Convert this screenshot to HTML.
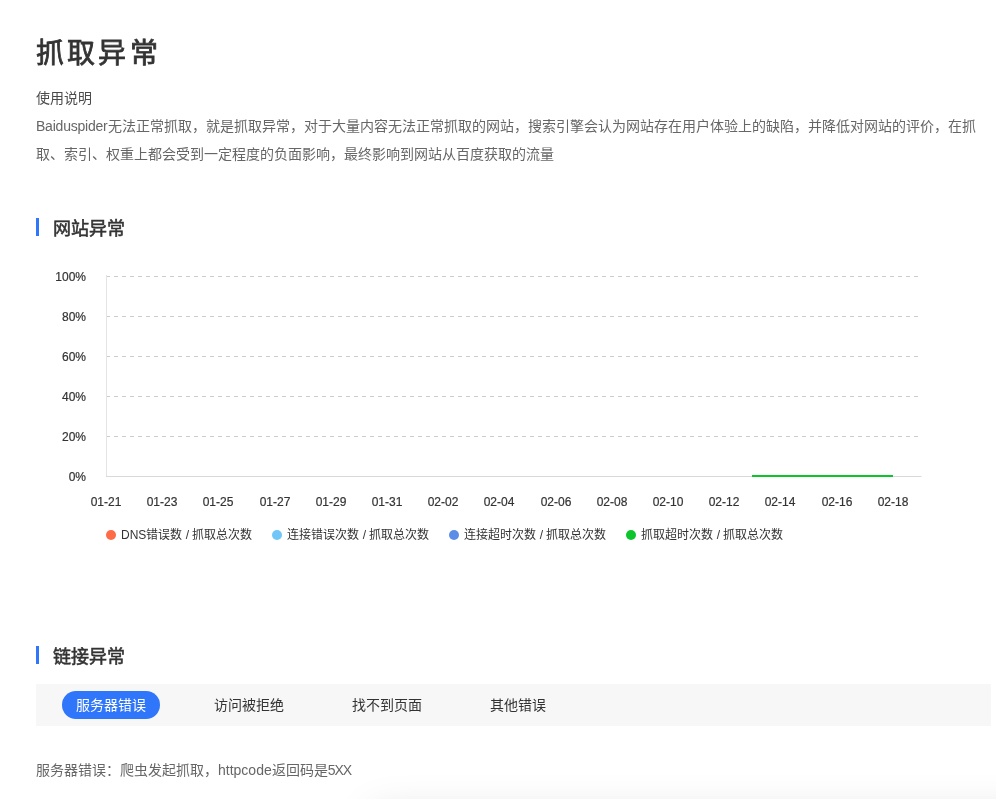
<!DOCTYPE html>
<html lang="zh-CN">
<head>
<meta charset="utf-8">
<title>抓取异常</title>
<style>
*{box-sizing:border-box;margin:0;padding:0}
html,body{width:996px;height:799px;overflow:hidden;background:#fff}
body{font-family:"Liberation Sans",sans-serif;color:#333;position:relative}
.abs{position:absolute;white-space:nowrap}
h1{position:absolute;left:36px;top:33px;font-size:28px;line-height:42px;font-weight:500;-webkit-text-stroke:0.8px #333;letter-spacing:3.2px;color:#333;white-space:nowrap}
.use{left:36px;top:84px;font-size:14px;line-height:28px;color:#4a4a4a}
.desc{position:absolute;left:36px;top:112px;width:955px;white-space:nowrap;font-size:14px;line-height:28px;color:#666}
.sec{position:absolute;left:36px;height:18px;border-left:3px solid #2f76fa;padding-left:14px;font-size:18px;line-height:23px;font-weight:500;-webkit-text-stroke:0.55px #333;color:#333;white-space:nowrap}
.chart{position:absolute;left:0;top:255px}
.ylab{-webkit-text-stroke:0.2px #333;position:absolute;width:50px;text-align:right;left:36px;font-size:12px;line-height:14px;color:#333}
.xlab{-webkit-text-stroke:0.2px #333;position:absolute;width:56px;text-align:center;font-size:12px;line-height:14px;color:#333;top:495px}
.leg{position:absolute;top:527px;font-size:12px;line-height:16px;color:#333;white-space:nowrap}
.leg i{position:absolute;left:-15px;top:3px;width:10px;height:10px;border-radius:50%}
.tabs{position:absolute;left:36px;top:684px;width:955px;height:42px;background:#f7f7f7}
.tab{position:absolute;top:7px;height:28px;line-height:28px;font-size:14px;color:#333;white-space:nowrap}
.tab.on{left:26px;width:98px;text-align:center;border-radius:14px;background:#2f76fa;color:#fff}
.note{left:36px;top:756px;font-size:14px;line-height:28px;color:#666}
.shadow{position:absolute;left:372px;top:812px;width:800px;height:100px;box-shadow:0 0 40px rgba(0,0,0,.13)}
</style>
</head>
<body>
<div id="wrap" style="position:absolute;left:0;top:0;width:996px;height:799px;overflow:hidden;will-change:transform">
<h1>抓取异常</h1>
<div class="abs use">使用说明</div>
<div class="desc"><span style="letter-spacing:-0.22px">Baiduspider</span>无法正常抓取，就是抓取异常，对于大量内容无法正常抓取的网站，搜索引擎会认为网站存在用户体验上的缺陷，并降低对网站的评价，在抓<br>取、索引、权重上都会受到一定程度的负面影响，最终影响到网站从百度获取的流量</div>

<div class="sec" style="top:218px">网站异常</div>

<svg class="chart" width="996" height="240" viewBox="0 255 996 240">
  <g stroke="#ccc" stroke-width="1" stroke-dasharray="4 4" fill="none">
    <line x1="106" y1="276.5" x2="920" y2="276.5"/>
    <line x1="106" y1="316.5" x2="920" y2="316.5"/>
    <line x1="106" y1="356.5" x2="920" y2="356.5"/>
    <line x1="106" y1="396.5" x2="920" y2="396.5"/>
    <line x1="106" y1="436.5" x2="920" y2="436.5"/>
  </g>
  <line x1="106.5" y1="275" x2="106.5" y2="476" stroke="#e4e4e4" stroke-width="1"/>
  <line x1="106" y1="476.5" x2="921.5" y2="476.5" stroke="#d9d9d9" stroke-width="1"/>
  <line x1="752" y1="476" x2="893" y2="476" stroke="#0cc52c" stroke-width="2"/>
</svg>

<div class="ylab" style="top:270px">100%</div>
<div class="ylab" style="top:310px">80%</div>
<div class="ylab" style="top:350px">60%</div>
<div class="ylab" style="top:390px">40%</div>
<div class="ylab" style="top:430px">20%</div>
<div class="ylab" style="top:470px">0%</div>

<div class="xlab" style="left:78px">01-21</div>
<div class="xlab" style="left:134px">01-23</div>
<div class="xlab" style="left:190px">01-25</div>
<div class="xlab" style="left:247px">01-27</div>
<div class="xlab" style="left:303px">01-29</div>
<div class="xlab" style="left:359px">01-31</div>
<div class="xlab" style="left:415px">02-02</div>
<div class="xlab" style="left:471px">02-04</div>
<div class="xlab" style="left:528px">02-06</div>
<div class="xlab" style="left:584px">02-08</div>
<div class="xlab" style="left:640px">02-10</div>
<div class="xlab" style="left:696px">02-12</div>
<div class="xlab" style="left:752px">02-14</div>
<div class="xlab" style="left:809px">02-16</div>
<div class="xlab" style="left:865px">02-18</div>

<div class="leg" style="left:121px"><i style="background:#fd6b47"></i>DNS错误数 / 抓取总次数</div>
<div class="leg" style="left:287.4px"><i style="background:#6fc6f7"></i>连接错误次数 / 抓取总次数</div>
<div class="leg" style="left:464.3px"><i style="background:#5b8de8"></i>连接超时次数 / 抓取总次数</div>
<div class="leg" style="left:641.3px"><i style="background:#0cc52c"></i>抓取超时次数 / 抓取总次数</div>

<div class="sec" style="top:646px">链接异常</div>

<div class="tabs">
  <div class="tab on">服务器错误</div>
  <div class="tab" style="left:178px">访问被拒绝</div>
  <div class="tab" style="left:316px">找不到页面</div>
  <div class="tab" style="left:454px">其他错误</div>
</div>

<div class="abs note">服务器错误：爬虫发起抓取，httpcode返回码是<span style="letter-spacing:-1px">5XX</span></div>
<div class="shadow"></div>
</div>
</body>
</html>
